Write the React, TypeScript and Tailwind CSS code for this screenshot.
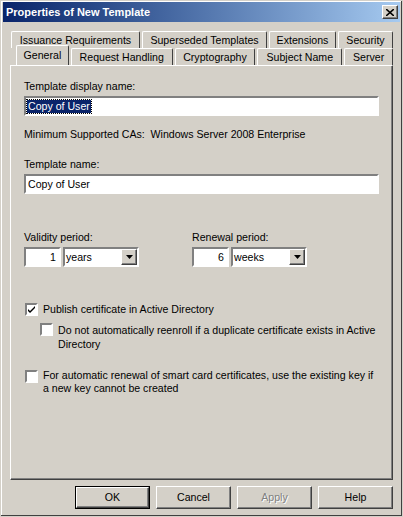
import React from "react";

const raised = "border border-t-white border-l-white border-r-[#404040] border-b-[#404040] shadow-[inset_-1px_-1px_0_#808080]";
const sunken = "border-2 border-t-[#808080] border-l-[#808080] border-r-white border-b-white";

function Tab({ label, w, sel }: { label: string; w: number; sel?: boolean }) {
  return (
    <div
      style={{ width: w }}
      className={`flex items-center justify-center border border-b-0 border-t-white border-l-white border-r-[#404040] rounded-t-[2px] bg-[#d4d0c8] ${sel ? "h-[20px] -mt-[3px] relative z-10" : "h-[17px]"}`}
    >
      {label}
    </div>
  );
}

function Check({ checked }: { checked?: boolean }) {
  return (
    <div className={`w-[13px] h-[13px] bg-white ${sunken} flex items-center justify-center shrink-0`}>
      {checked && (
        <svg width="7" height="7" viewBox="0 0 7 7"><path d="M0 3 L2 5 L7 0 L7 2 L2 7 L0 5 Z" fill="#000" /></svg>
      )}
    </div>
  );
}

function Period({ n, unit }: { n: string; unit: string }) {
  return (
    <div className="flex gap-[2px] mt-[3px]">
      <div className={`w-[37px] h-[20px] bg-white ${sunken} text-right pr-[3px] leading-[16px]`}>{n}</div>
      <div className={`w-[76px] h-[20px] bg-white ${sunken} flex items-center justify-between`}>
        <span className="pl-[1px]">{unit}</span>
        <div className={`w-[16px] h-[16px] bg-[#d4d0c8] ${raised} flex items-center justify-center`}>
          <svg width="7" height="4" viewBox="0 0 7 4"><path d="M0 0H7L3.5 4Z" fill="#000" /></svg>
        </div>
      </div>
    </div>
  );
}

function Btn({ label, def, dis }: { label: string; def?: boolean; dis?: boolean }) {
  return (
    <div className={`w-[75px] h-[23px] flex items-center justify-center ${def ? "border border-black" : ""}`}>
      <div className={`w-full h-full ${raised} flex items-center justify-center ${dis ? "text-[#808080] [text-shadow:1px_1px_0_#fff]" : ""}`}>{label}</div>
    </div>
  );
}

export default function App() {
  return (
    <div className="w-[403px] h-[517px] bg-[#d4d0c8] text-[10.6px] leading-[13px] text-black border border-[#d4d0c8] shadow-[inset_-1px_-1px_0_#404040,inset_1px_1px_0_#fff] flex flex-col" style={{ fontFamily: "Tahoma, 'Liberation Sans', sans-serif" }}>
      <div className="h-[20px] mx-[2px] mt-[1px] flex items-center justify-between pl-[3px] pr-[2px] bg-gradient-to-r from-[#0a246a] to-[#a6caf0]">
        <span className="text-white font-bold text-[11px]">Properties of New Template</span>
        <div className={`w-[16px] h-[14px] bg-[#d4d0c8] ${raised} flex items-center justify-center`}>
          <svg width="8" height="7" viewBox="0 0 8 7"><path d="M0 0L8 7M8 0L0 7" stroke="#000" strokeWidth="1.6" /></svg>
        </div>
      </div>
      <div className="px-[9px] pt-[9px]">
        <div className="flex ml-[1px] gap-[2px] h-[17px]">
          <Tab label="Issuance Requirements" w={129} />
          <Tab label="Superseded Templates" w={125} />
          <Tab label="Extensions" w={67} />
          <Tab label="Security" w={55} />
        </div>
        <div className="flex h-[17px] ml-[6px]">
          <Tab label="General" w={53} sel />
          <div className="w-[2px]" />
          <Tab label="Request Handling" w={102} />
          <div className="w-[2px]" />
          <Tab label="Cryptography" w={81} />
          <div className="w-[2px]" />
          <Tab label="Subject Name" w={85} />
          <div className="w-[2px]" />
          <Tab label="Server" w={49} />
        </div>
        <div className="h-[415px] w-[383px] border border-t-white border-l-white border-r-[#404040] border-b-[#404040] shadow-[inset_-1px_-1px_0_#808080] px-[13px] pt-[14px]">
          <div>Template display name:</div>
          <div className={`mt-[3px] h-[20px] bg-white ${sunken} flex items-center pl-[1px]`}>
            <span className="bg-[#0a246a] text-white px-[1px] leading-[13px] outline-1 outline-dotted outline-black">Copy of User</span>
          </div>
          <div className="mt-[12px]">Minimum Supported CAs:&nbsp;&nbsp;Windows Server 2008 Enterprise</div>
          <div className="mt-[17px]">Template name:</div>
          <div className={`mt-[3px] h-[20px] bg-white ${sunken} flex items-center pl-[2px]`}>Copy of User</div>
          <div className="mt-[37px] flex">
            <div className="w-[168px]">
              <div>Validity period:</div>
              <Period n="1" unit="years" />
            </div>
            <div>
              <div>Renewal period:</div>
              <Period n="6" unit="weeks" />
            </div>
          </div>
          <div className="mt-[36px] flex items-center gap-[5px] ml-[1px]">
            <Check checked />
            <span>Publish certificate in Active Directory</span>
          </div>
          <div className="mt-[7px] ml-[16px] flex gap-[5px]">
            <div><Check /></div>
            <span className="leading-[14px]">Do not automatically reenroll if a duplicate certificate exists in Active Directory</span>
          </div>
          <div className="mt-[18px] ml-[1px] flex gap-[5px]">
            <div className="mt-[1px]"><Check /></div>
            <span className="leading-[13px]">For automatic renewal of smart card certificates, use the existing key if a new key cannot be created</span>
          </div>
        </div>
        <div className="flex justify-end gap-[6px] mt-[6px] pr-0">
          <Btn label="OK" def />
          <Btn label="Cancel" />
          <Btn label="Apply" dis />
          <Btn label="Help" />
        </div>
      </div>
    </div>
  );
}
